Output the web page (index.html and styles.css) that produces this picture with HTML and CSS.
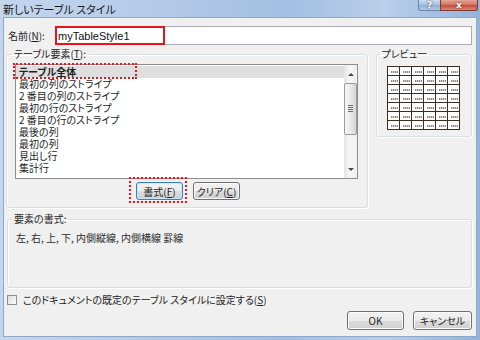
FILE: index.html
```html
<!DOCTYPE html>
<html>
<head>
    <title>新しいテーブル スタイル</title>
    <link rel="stylesheet" href="styles.css">
</head>
<body>
    <div class="window">
        <div class="titlebar">
            <span class="title">新しいテーブル スタイル</span>
            <div class="caption-buttons">
                <span class="cap-help">?</span>
                <span class="cap-close">x</span>
            </div>
        </div>

        <div class="client">
            <div class="name-row">
                <label for="styleName">名前(<u>N</u>):</label>
                <div class="name-field">
                    <input type="text" id="styleName" value="myTableStyle1">
                    <span class="mark-name"></span>
                </div>
            </div>

            <div class="middle">
                <fieldset class="group elements">
                    <legend>テーブル要素(<u>T</u>):</legend>
                    <div class="listbox">
                        <ul class="items">
                            <li class="selected">テーブル全体</li>
                            <li>最初の列のストライプ</li>
                            <li>2 番目の列のストライプ</li>
                            <li>最初の行のストライプ</li>
                            <li>2 番目の行のストライプ</li>
                            <li>最後の列</li>
                            <li>最初の列</li>
                            <li>見出し行</li>
                            <li>集計行</li>
                        </ul>
                        <div class="scrollbar">
                            <div class="sb-up"></div>
                            <div class="sb-thumb"></div>
                            <div class="sb-track"></div>
                            <div class="sb-down"></div>
                        </div>
                    </div>
                    <div class="element-buttons">
                        <span class="mark-button"><button class="btn btn-small btn-default">書式(<u>F</u>)</button></span>
                        <button class="btn btn-small">クリア(<u>C</u>)</button>
                    </div>
                </fieldset>

                <fieldset class="group preview">
                    <legend>プレビュー</legend>
                    <table class="preview-table">
                        <tr><td></td><td></td><td></td><td></td><td></td><td></td></tr>
                        <tr><td></td><td></td><td></td><td></td><td></td><td></td></tr>
                        <tr><td></td><td></td><td></td><td></td><td></td><td></td></tr>
                        <tr><td></td><td></td><td></td><td></td><td></td><td></td></tr>
                        <tr><td></td><td></td><td></td><td></td><td></td><td></td></tr>
                        <tr><td></td><td></td><td></td><td></td><td></td><td></td></tr>
                        <tr><td></td><td></td><td></td><td></td><td></td><td></td></tr>
                    </table>
                </fieldset>
            </div>

            <fieldset class="group format">
                <legend>要素の書式:</legend>
                <p class="format-text">左, 右, 上, 下, 内側縦線, 内側横線 罫線</p>
            </fieldset>

            <label class="check-row">
                <input type="checkbox" class="check">
                <span>このドキュメントの既定のテーブル スタイルに設定する(<u>S</u>)</span>
            </label>

            <div class="dialog-buttons">
                <button class="btn btn-ok">OK</button>
                <button class="btn btn-cancel">キャンセル</button>
            </div>
        </div>
    </div>
</body>
</html>
```

FILE: styles.css
```css
body {
    margin: 0;
    font-family: "Noto Sans CJK JP", "Noto Sans", sans-serif;
    font-size: 10px;
    color: #1e1e1e;
    font-feature-settings: "palt";
}
u {
    text-decoration: underline;
    text-underline-offset: 1px;
}

/* ウィンドウ枠 */
.window {
    width: 480px;
    height: 340px;
    display: flex;
    flex-direction: column;
    background: linear-gradient(90deg, #c3d6ee 0%, #b2c9e7 35%, #a4bfe2 60%, #b9cfea 80%, #94b3da 100%);
}
.titlebar {
    height: 18px;
    display: flex;
    align-items: flex-start;
}
.title {
    font-size: 11px;
    line-height: 19px;
    padding-left: 3px;
    color: #1a1a1a;
}
.caption-buttons {
    margin-left: auto;
    margin-right: 2px;
    display: flex;
}
.cap-help,
.cap-close {
    height: 11px;
    line-height: 10px;
    text-align: center;
    color: #fff;
    font-family: "DejaVu Sans", sans-serif;
    font-weight: bold;
    font-size: 9px;
    text-shadow: 0 0 2px #333;
    box-sizing: border-box;
}
.cap-help {
    width: 22px;
    border: 1px solid #6c84a6;
    border-right: none;
    border-top: none;
    border-radius: 0 0 0 3px;
    background: linear-gradient(#c9dbf0, #a7c0e0 50%, #93afd5 51%, #b1c8e6);
}
.cap-close {
    width: 38px;
    border: 1px solid #7d3a33;
    border-top: none;
    border-radius: 0 0 3px 0;
    background: linear-gradient(#e4a396, #d27262 50%, #c54a38 51%, #d98770);
}

/* クライアント領域 */
.client {
    flex: 1;
    margin: 0 4px 4px;
    padding: 8px 4px 0 2px;
    background: #f0f0f0;
    box-shadow: 0 0 0 1px #8fa8c8;
}
.name-row {
    display: flex;
    align-items: center;
    height: 19px;
}
.name-row label {
    width: 47px;
    padding-left: 2px;
}
.name-field {
    flex: 1;
    position: relative;
    height: 19px;
}
.name-field input {
    width: 100%;
    height: 19px;
    box-sizing: border-box;
    margin: 0;
    border: 1px solid #abadb3;
    padding: 0 2px;
    font-family: "Liberation Sans", Arial, sans-serif;
    font-size: 11px;
    color: #111;
    background: #fff;
    outline: none;
}
.mark-name {
    position: absolute;
    top: 0;
    left: 0;
    width: 110px;
    height: 19px;
    box-sizing: border-box;
    border: 2px solid #e8141c;
}

/* グループボックス */
.group {
    margin: 0;
    padding: 0;
    min-width: 0;
    box-sizing: border-box;
    border: 1px solid #d5dfe5;
    border-radius: 3px;
    box-shadow: inset 1px 1px 0 #fff, 1px 1px 0 #fff;
}
.group legend {
    padding: 0 2px;
    line-height: 12px;
}
.middle {
    display: flex;
    align-items: flex-start;
    margin-top: 3px;
}
.elements {
    width: 364px;
    padding: 4px 5px 7px;
}
.listbox {
    margin: 0 4px 0 3px;
    height: 115px;
    box-sizing: border-box;
    border: 1px solid #8b8d91;
    background: #fff;
    display: flex;
}
.items {
    flex: 1;
    list-style: none;
    margin: 0;
    padding: 1px 0 0;
}
.items li {
    height: 12px;
    line-height: 12px;
    padding-left: 3px;
    white-space: nowrap;
}
.items li.selected {
    position: relative;
    font-weight: bold;
    background: #dedede;
}
.items li.selected::after {
    content: "";
    position: absolute;
    top: -3px;
    left: -3px;
    width: 124px;
    height: 16px;
    box-sizing: border-box;
    border: 2px dotted #e8141c;
}
.scrollbar {
    width: 13px;
    display: flex;
    flex-direction: column;
    background: linear-gradient(90deg, #e4e4e4, #f5f5f5 40%, #f0f0f0);
}
.sb-up,
.sb-down {
    height: 16px;
    position: relative;
}
.sb-up::before,
.sb-down::before {
    content: "";
    position: absolute;
    left: 4px;
    border-left: 3px solid transparent;
    border-right: 3px solid transparent;
}
.sb-up::before {
    top: 8px;
    border-bottom: 3px solid #4a4a4a;
}
.sb-down::before {
    top: 6px;
    border-top: 3px solid #4a4a4a;
}
.sb-thumb {
    margin: 2px 0 0;
    height: 52px;
    box-sizing: border-box;
    border: 1px solid #9a9a9a;
    border-radius: 2px;
    background: linear-gradient(90deg, #f6f6f6, #e9e9e9 50%, #d6d6d6);
    position: relative;
}
.sb-thumb::after {
    content: "";
    position: absolute;
    top: 21px;
    left: 3px;
    width: 5px;
    height: 7px;
    background: repeating-linear-gradient(#6e6e6e 0 1px, transparent 1px 2px);
}
.sb-track {
    flex: 1;
}
.element-buttons {
    display: flex;
    gap: 10px;
    margin-top: 3px;
    padding-left: 124px;
}
.mark-button {
    position: relative;
    display: flex;
}
.mark-button::after {
    content: "";
    position: absolute;
    top: -5px;
    left: -7px;
    right: -4px;
    bottom: -3px;
    border: 2px dotted #e8141c;
}

/* プレビュー */
.preview {
    width: 97px;
    margin-left: 8px;
    padding: 6px 3px 6px;
}
.preview-table {
    margin: 0 auto;
    border-collapse: collapse;
}
.preview-table td {
    width: 11px;
    height: 8px;
    padding: 0;
    border: 1px solid #3a2c20;
    background: #fff;
    position: relative;
}
.preview-table td::after {
    content: "";
    position: absolute;
    left: 3px;
    top: 4px;
    width: 7px;
    height: 2px;
    background: repeating-linear-gradient(90deg, #8c8c8c 0 1px, #cfcfcf 1px 2px);
}

/* 要素の書式 */
.format {
    width: 465px;
    height: 75px;
    margin: 5px 0 0 1px;
    padding: 0 4px;
}
.format-text {
    margin: 7px 0 0 4px;
    line-height: 12px;
    color: #2a2a2a;
}

.check-row {
    display: flex;
    align-items: center;
    margin-top: 6px;
    padding-left: 1px;
    line-height: 12px;
}
.check {
    appearance: none;
    width: 10px;
    height: 10px;
    margin: 0 6px 0 0;
    border: 1px solid #8e8f8f;
    background: linear-gradient(135deg, #dcdcdc, #fbfbfb);
}

/* ボタン */
.btn {
    margin: 0;
    padding: 0;
    font-family: "Noto Sans CJK JP", "Noto Sans", sans-serif;
    font-size: 10px;
    font-feature-settings: "palt";
    color: #1e1e1e;
    border: 1px solid #707070;
    border-radius: 3px;
    background: linear-gradient(#f2f2f2 0%, #ebebeb 50%, #dddddd 51%, #cfcfcf 100%);
    box-shadow: inset 0 0 0 1px #fbfbfb;
}
.btn-small {
    width: 47px;
    height: 18px;
}
.btn-default {
    border-color: #3c7fb1;
    box-shadow: inset 0 0 0 1px #c6e8fb;
}
.dialog-buttons {
    display: flex;
    justify-content: flex-end;
    gap: 9px;
    margin-top: 5px;
}
.btn-ok {
    width: 57px;
    height: 19px;
}
.btn-cancel {
    width: 59px;
    height: 19px;
}
```
